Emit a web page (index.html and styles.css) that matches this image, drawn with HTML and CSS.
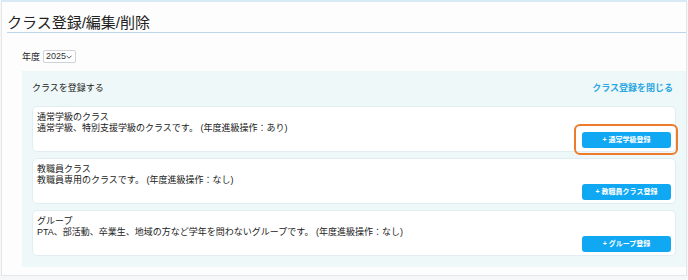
FILE: index.html
```html
<!DOCTYPE html>
<html lang="ja">
<head>
  <meta charset="utf-8">
  <title>クラス登録/編集/削除</title>
  <link rel="stylesheet" href="styles.css">
</head>
<body>
  <div class="page">
    <h1 class="page-title">クラス登録/編集/削除</h1>

    <div class="year-row">
      <label for="year">年度</label>
      <span class="select-wrap">
        <select id="year" class="year-select">
          <option>2025</option>
          <option>2024</option>
        </select>
        <svg class="select-arrow" width="6" height="4" viewBox="0 0 6 4"><path d="M0.5 0.7 L3 3.2 L5.5 0.7" fill="none" stroke="#444" stroke-width="0.9"/></svg>
      </span>
    </div>

    <div class="panel">
      <div class="panel-header">
        <span>クラスを登録する</span>
        <a class="close-link">クラス登録を閉じる</a>
      </div>

      <div class="card">
        <div class="card-text">
          <div>通常学級のクラス</div>
          <div>通常学級、特別支援学級のクラスです。 (年度進級操作：あり)</div>
        </div>
        <div class="card-actions">
          <span class="highlight-wrap">
            <a class="add-button">+ 通常学級登録</a>
            <span class="highlight"></span>
          </span>
        </div>
      </div>

      <div class="card">
        <div class="card-text">
          <div>教職員クラス</div>
          <div>教職員専用のクラスです。 (年度進級操作：なし)</div>
        </div>
        <div class="card-actions">
          <a class="add-button">+ 教職員クラス登録</a>
        </div>
      </div>

      <div class="card">
        <div class="card-text">
          <div>グループ</div>
          <div>PTA、部活動、卒業生、地域の方など学年を問わないグループです。 (年度進級操作：なし)</div>
        </div>
        <div class="card-actions">
          <a class="add-button">+ グループ登録</a>
        </div>
      </div>
    </div>
  </div>
</body>
</html>
```

FILE: styles.css
```css
/* クラス登録画面 */
body {
  margin: 0;
  padding: 0;
  background-color: #f6f7f8;
  font-family: "Liberation Sans", "Noto Sans CJK JP", sans-serif;
  color: #333;
}

.page {
  width: 684px;
  margin-left: 1px;
  padding-bottom: 8px;
  background-color: #fdfdfe;
  border: 1px solid #e4e6e8;
  border-top: 2px solid #d8eaf6;
}

.page-title {
  margin: 0 0 0 5px;
  padding-top: 12px;
  font-size: 15px;
  line-height: 18px;
  font-weight: normal;
  color: #222;
  border-bottom: 1px solid #bcd4ee;
}

.year-row {
  display: flex;
  align-items: center;
  gap: 3px;
  margin: 17px 0 0 20px;
  height: 12px;
  font-size: 9px;
  color: #222;
}

.select-wrap {
  position: relative;
  display: inline-block;
}

.year-select {
  appearance: none;
  -webkit-appearance: none;
  width: 33px;
  height: 13px;
  padding: 0 0 0 2px;
  font-family: inherit;
  font-size: 9px;
  color: #333;
  background-color: #fff;
  border: 1px solid #cfd2d6;
  border-radius: 2px;
}

.select-arrow {
  position: absolute;
  right: 4px;
  top: 5px;
}

.panel {
  margin: 9px 0 0 20px;
  padding: 11px 10px 11px 10px;
  background-color: #eef8f9;
}

.panel-header {
  display: flex;
  justify-content: space-between;
  font-size: 9px;
  line-height: 12px;
  margin-bottom: 12px;
  color: #222;
}

.close-link {
  margin-right: 3px;
  color: #2aa6e2;
  font-weight: bold;
  cursor: pointer;
}

.card {
  display: flex;
  flex-direction: column;
  height: 46px;
  box-sizing: border-box;
  padding: 5px 4px 4px 4px;
  margin-bottom: 6px;
  background-color: #fff;
  border: 1px solid #e0eef1;
  border-radius: 5px;
  font-size: 9px;
  line-height: 11px;
  color: #222;
}

.card:last-child {
  margin-bottom: 0;
}

.card-actions {
  display: flex;
  justify-content: flex-end;
  margin-top: -2px;
}

.highlight-wrap {
  position: relative;
  display: inline-block;
}

.add-button {
  display: block;
  width: 89px;
  height: 16px;
  line-height: 16px;
  text-align: center;
  font-size: 7px;
  font-weight: bold;
  color: #fff;
  background-color: #10a8f3;
  border-radius: 3px;
  cursor: pointer;
}

.highlight {
  position: absolute;
  left: -8px;
  right: -7px;
  top: -8px;
  bottom: -7px;
  border: 2px solid #ee7b2c;
  border-radius: 6px;
}
```
